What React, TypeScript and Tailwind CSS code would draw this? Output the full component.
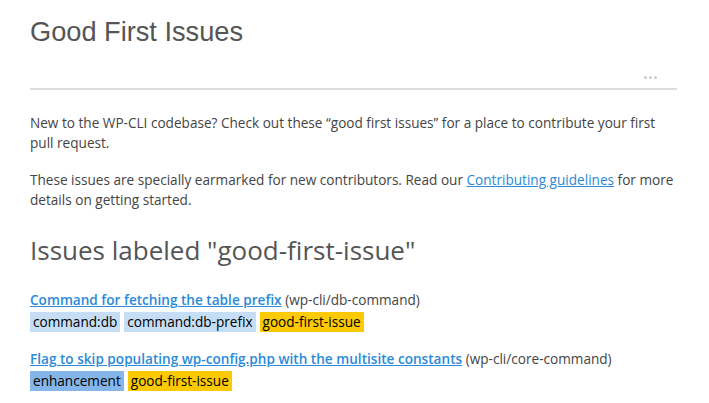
const issues = [
  {
    title: 'Command for fetching the table prefix',
    repo: 'wp-cli/db-command',
    labels: [
      { name: 'command:db', color: 'bg-[#c5def5]' },
      { name: 'command:db-prefix', color: 'bg-[#c5def5]' },
      { name: 'good-first-issue', color: 'bg-[#fbca04]' },
    ],
  },
  {
    title: 'Flag to skip populating wp-config.php with the multisite constants',
    repo: 'wp-cli/core-command',
    labels: [
      { name: 'enhancement', color: 'bg-[#84b6eb]' },
      { name: 'good-first-issue', color: 'bg-[#fbca04]' },
    ],
  },
];

export default function App() {
  return (
    <div className="w-[709px] h-[403px] overflow-hidden bg-white pl-[30px] pr-[32px] font-['Open_Sans',sans-serif] text-[#444]">
      {/* Cabecera */}
      <h1 className="pt-[15px] text-[27.2px] leading-[34px] font-['Liberation_Sans',sans-serif] text-[#555]">
        Good First Issues
      </h1>
      <div className="flex justify-end pt-[27px] pb-[9px] pr-[20px] border-b-2 border-[#ddd]">
        <div className="flex gap-[2px]">
          <span className="w-[3px] h-[3px] rounded-full bg-[#ccc]" />
          <span className="w-[3px] h-[3px] rounded-full bg-[#ccc]" />
          <span className="w-[3px] h-[3px] rounded-full bg-[#ccc]" />
        </div>
      </div>

      <div className="pr-[2px]">
        <p className="mt-[23px] text-[13.6px] leading-[20px]">
          New to the WP-CLI codebase? Check out these “good first issues” for a place to contribute your first pull request.
        </p>
        <p className="mt-[17px] text-[13.6px] leading-[20px]">
          These issues are specially earmarked for new contributors. Read our{' '}
          <a href="#" className="text-[#2a8ad8] underline">
            Contributing guidelines
          </a>{' '}
          for more details on getting started.
        </p>
      </div>

      <h2 className="mt-[23px] text-[26px] leading-[34px] text-[#555]">
        Issues labeled "good-first-issue"
      </h2>

      <div className="mt-[23px] flex flex-col gap-[17px]">
        {issues.map((issue) => (
          <div key={issue.title} className="text-[13.6px] leading-[20px]">
            <div>
              <a href="#" className="font-semibold text-[#2a8ad8] underline">
                {issue.title}
              </a>{' '}
              ({issue.repo})
            </div>
            <div className="flex gap-[4px] mt-[2px]">
              {issue.labels.map((label) => (
                <span
                  key={label.name}
                  className={`${label.color} px-[3px] h-[20px] leading-[20px] text-black`}
                >
                  {label.name}
                </span>
              ))}
            </div>
          </div>
        ))}
      </div>
    </div>
  );
}
